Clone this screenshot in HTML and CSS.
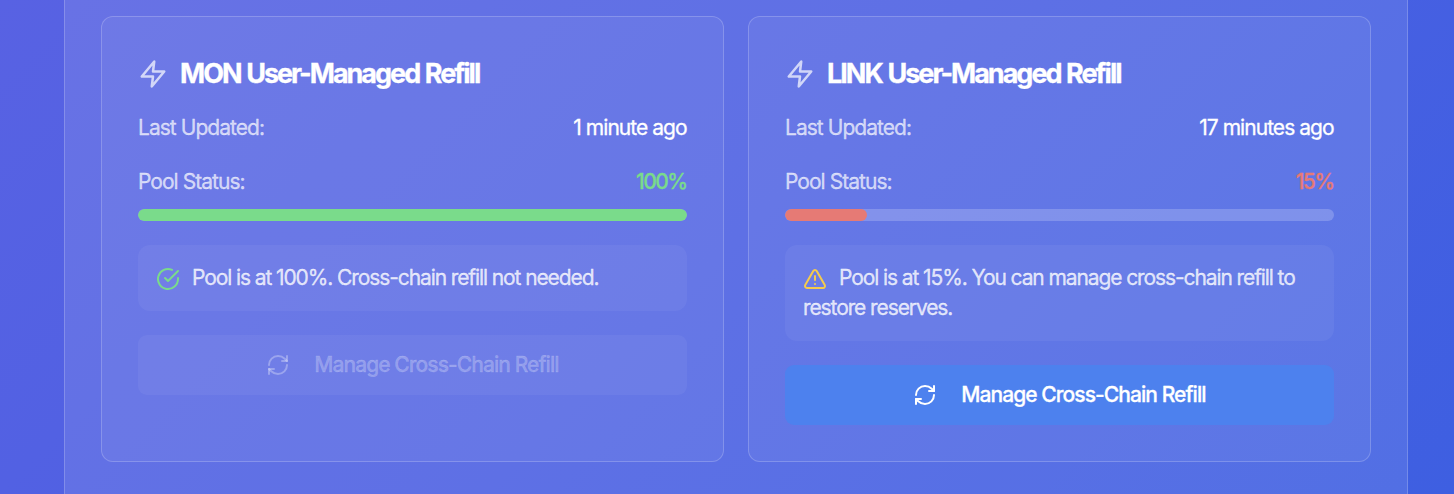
FILE: index.html
```html
<!DOCTYPE html>
<html lang="en">
<head>
<meta charset="utf-8">
<title>User-Managed Refill</title>
<link rel="stylesheet" href="styles.css">
</head>
<body>
<main class="panel">
  <section class="card">
    <h2 class="title">
      <svg class="zap" viewBox="0 0 24 24"><path d="M13 2 3 14h9l-1 8 10-12h-9l1-8z"/></svg>
      <span class="title-text">MON User-Managed Refill</span>
    </h2>
    <div class="row updated"><span class="label">Last Updated:</span><span class="value">1 minute ago</span></div>
    <div class="row"><span class="label">Pool Status:</span><span class="percent good">100%</span></div>
    <div class="track"><div class="fill fill-good" style="width:100%"></div></div>
    <p class="notice"><svg class="notice-icon good" viewBox="0 0 24 24"><path d="M22 11.08V12a10 10 0 1 1-5.93-9.14"/><path d="m9 11 3 3L22 4"/></svg><span>Pool is at 100%. Cross-chain refill not needed.</span></p>
    <button class="button disabled" disabled><svg class="refresh" viewBox="0 0 24 24"><path d="M3 12a9 9 0 0 1 9-9 9.75 9.75 0 0 1 6.74 2.74L21 8"/><path d="M21 3v5h-5"/><path d="M21 12a9 9 0 0 1-9 9 9.75 9.75 0 0 1-6.74-2.74L3 16"/><path d="M8 16H3v5"/></svg><span>Manage Cross-Chain Refill</span></button>
  </section>
  <section class="card">
    <h2 class="title">
      <svg class="zap" viewBox="0 0 24 24"><path d="M13 2 3 14h9l-1 8 10-12h-9l1-8z"/></svg>
      <span class="title-text">LINK User-Managed Refill</span>
    </h2>
    <div class="row updated"><span class="label">Last Updated:</span><span class="value">17 minutes ago</span></div>
    <div class="row"><span class="label">Pool Status:</span><span class="percent low">15%</span></div>
    <div class="track"><div class="fill fill-low" style="width:15%"></div></div>
    <p class="notice"><svg class="notice-icon warn" viewBox="0 0 24 24"><path d="m21.73 18-8-14a2 2 0 0 0-3.48 0l-8 14A2 2 0 0 0 4 21h16a2 2 0 0 0 1.73-3Z"/><path d="M12 9v4"/><path d="M12 17h.01"/></svg><span>Pool is at 15%. You can manage cross-chain refill to restore reserves.</span></p>
    <button class="button"><svg class="refresh" viewBox="0 0 24 24"><path d="M3 12a9 9 0 0 1 9-9 9.75 9.75 0 0 1 6.74 2.74L21 8"/><path d="M21 3v5h-5"/><path d="M21 12a9 9 0 0 1-9 9 9.75 9.75 0 0 1-6.74-2.74L3 16"/><path d="M8 16H3v5"/></svg><span>Manage Cross-Chain Refill</span></button>
  </section>
</main>
</body>
</html>
```
FILE: styles.css
```css
* { box-sizing: border-box; }
body {
  margin: 0;
  height: 494px;
  overflow: hidden;
  padding: 0 46px 0 64px;
  font-family: Inter, "Liberation Sans", sans-serif;
  font-size: 21px;
  line-height: 30px;
  letter-spacing: -0.96px;
  color: #fff;
  -webkit-text-stroke: .3px currentColor;
  background: linear-gradient(135deg, #5862e3 0%, #4c60e3 50%, #3e5fe1 100%);
}
.panel {
  display: grid;
  grid-template-columns: 1fr 1fr;
  align-items: stretch;
  gap: 24px;
  height: 494px;
  padding: 16px 36px 32px;
  background: rgba(255, 255, 255, .1);
  border: solid rgba(255, 255, 255, .2);
  border-width: 0 1px;
}
.card {
  height: 446px;
  padding: 36px;
  border: 1px solid rgba(255, 255, 255, .2);
  border-radius: 12px;
  background: rgba(255, 255, 255, .05);
}
svg {
  flex: none;
  fill: none;
  stroke: currentColor;
  stroke-width: 2;
  stroke-linecap: round;
  stroke-linejoin: round;
}
.title {
  display: flex;
  align-items: center;
  gap: 12px;
  height: 42px;
  margin: 0 0 18px;
  font-size: 27px;
  font-weight: 700;
  letter-spacing: -2px;
  word-spacing: 1.2px;
}
.zap { width: 30px; height: 30px; color: rgba(255, 255, 255, .7); }
.row { display: flex; justify-content: space-between; height: 30px; }
.updated { margin-bottom: 24px; }
.label { color: rgba(255, 255, 255, .7); }
.value { margin-right: .4px; }
.percent { font-weight: 500; letter-spacing: -1.6px; margin-right: .6px; }
.good { color: #7adb8b; }
.low { color: #e67a75; }
.warn { color: #f5cb4c; }
.track {
  height: 12px;
  margin: 12px 0 24px;
  border-radius: 6px;
  overflow: hidden;
  background: rgba(255, 255, 255, .2);
}
.fill { height: 100%; border-radius: 6px; }
.fill-good { background: #7adb8b; }
.fill-low { background: #e67a75; }
.notice {
  margin: 0 0 24px;
  padding: 18px;
  border-radius: 12px;
  background: rgba(255, 255, 255, .05);
  color: rgba(255, 255, 255, .8);
  letter-spacing: -1.1px;
}
.notice-icon { width: 24px; height: 24px; margin-right: 12px; vertical-align: middle; }
.button {
  display: flex;
  align-items: center;
  justify-content: center;
  gap: 24px;
  width: 100%;
  height: 60px;
  padding: 0;
  border: 0;
  border-radius: 9px;
  font: inherit;
  font-weight: 500;
  letter-spacing: -0.94px;
  color: #fff;
  background: #4d81ee;
}
.disabled { color: rgba(255, 255, 255, .25); background: rgba(255, 255, 255, .05); }
.refresh { width: 24px; height: 24px; }
.disabled .refresh { color: rgba(255, 255, 255, .3); }
```
